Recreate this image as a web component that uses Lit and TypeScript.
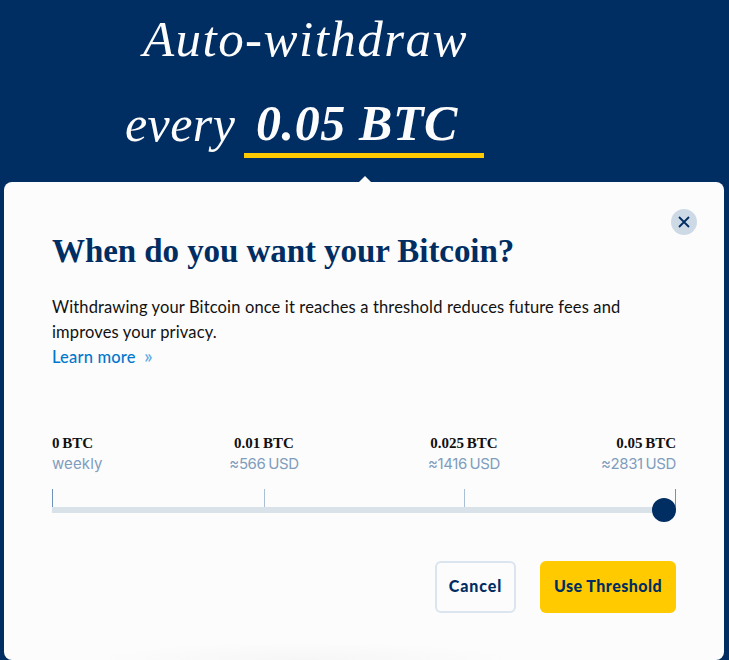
import { LitElement, html, css } from "lit";
import { customElement } from "lit/decorators.js";

const marks = [
  { btc: "0 BTC", sub: "weekly", align: "start", word: true },
  { btc: "0.01 BTC", sub: "≈566 USD", align: "center", word: false },
  { btc: "0.025 BTC", sub: "≈1416 USD", align: "center", word: false },
  { btc: "0.05 BTC", sub: "≈2831 USD", align: "end", word: false },
];

@customElement("app-root")
export class AppRoot extends LitElement {
  static styles = css`
    :host {
      display: block;
      height: 660px;
      overflow: hidden;
      background: #002d62;
      font-family: "Lato", sans-serif;
    }
    .head {
      display: flex;
      flex-direction: column;
      height: 182px;
      box-sizing: border-box;
      color: #fcfcfc;
      font-family: "Liberation Serif", serif;
      font-style: italic;
      font-size: 50px;
      position: relative;
    }
    .line1 {
      height: 83px;
      line-height: 78px;
      padding-left: 143px;
      font-size: 51px;
      letter-spacing: 1.45px;
    }
    .line2 {
      display: flex;
      align-items: flex-start;
      padding-left: 125px;
      line-height: 82px;
    }
    .every {
      width: 119px;
      letter-spacing: 0.4px;
    }
    .amount {
      width: 240px;
      height: 75px;
      box-sizing: border-box;
      border-bottom: 5px solid #ffcb00;
      padding-left: 12px;
      font-weight: 700;
      line-height: 81px;
      letter-spacing: 0.6px;
    }
    .caret {
      position: absolute;
      left: 359px;
      top: 176px;
      width: 0;
      height: 0;
      border-left: 6px solid transparent;
      border-right: 6px solid transparent;
      border-bottom: 6px solid #fcfcfc;
    }
    .panel {
      margin: 0 5px 0 4px;
      height: 478px;
      box-sizing: border-box;
      border-radius: 8px;
      background: radial-gradient(ellipse 210px 18px at 300px 100%, #f6f6f6, transparent), #fcfcfc;
      padding: 0 48px;
      position: relative;
    }
    .close {
      position: absolute;
      top: 27px;
      right: 27px;
      width: 26px;
      height: 26px;
      border-radius: 50%;
      background: #cddae6;
      border: 0;
      padding: 0;
      display: flex;
      align-items: center;
      justify-content: center;
    }
    h1 {
      margin: 0;
      padding-top: 49px;
      font-family: "Liberation Serif", serif;
      font-weight: 700;
      font-size: 33px;
      line-height: 40px;
      letter-spacing: -0.07px;
      color: #002d62;
    }
    .desc {
      margin: 24px 0 0;
      font-size: 16.5px;
      line-height: 25px;
      letter-spacing: 0.14px;
      color: #111;
    }
    .learn {
      display: block;
      font-size: 16.5px;
      line-height: 25px;
      letter-spacing: 0.18px;
      color: #0077cc;
      font-weight: 500;
    }
    .learn span {
      color: #5aa9e6;
      margin-left: 4px;
      font-size: 20px;
      line-height: 20px;
    }
    .labels {
      margin-top: 63px;
      display: grid;
      grid-template-columns: 112px 200px 200px 112px;
    }
    .mark {
      display: flex;
      flex-direction: column;
    }
    .mark.start { align-items: flex-start; }
    .mark.center { align-items: center; }
    .mark.end { align-items: flex-end; }
    .btc {
      font-family: "Liberation Serif", serif;
      font-weight: 700;
      font-size: 15px;
      line-height: 20px;
      word-spacing: -1px;
      color: #111;
    }
    .sub {
      font-family: "Inter", sans-serif;
      font-size: 15px;
      line-height: 22px;
      letter-spacing: -0.4px;
      word-spacing: -1px;
      color: #7f9dbd;
    }
    .sub.word {
      letter-spacing: 0.1px;
    }
    .ticks {
      margin-top: 14px;
      display: grid;
      grid-template-columns: 212px 200px 211px 1px;
      height: 18px;
    }
    .tick {
      width: 1px;
      background: #a9bfd5;
    }
    .tick.edge {
      background: #6f93b8;
    }
    .track {
      height: 6px;
      background: #d9e1e9;
      position: relative;
    }
    .thumb {
      position: absolute;
      right: 0;
      top: -9px;
      width: 24px;
      height: 24px;
      border-radius: 50%;
      background: #002d62;
    }
    .actions {
      margin-top: 48px;
      display: flex;
      justify-content: flex-end;
      gap: 24px;
    }
    button.btn {
      height: 52px;
      box-sizing: border-box;
      border-radius: 6px;
      font-family: "Lato", sans-serif;
      font-weight: 900;
      font-size: 16px;
      color: #002d62;
      padding: 0 0 4px;
    }
    .cancel {
      width: 81px;
      background: #fcfcfc;
      border: 2px solid #dbe5ef;
      letter-spacing: 0.9px;
    }
    .use {
      width: 136px;
      background: #ffcb00;
      border: 0;
      letter-spacing: 0.45px;
    }
  `;

  render() {
    return html`
      <div class="head">
        <div class="line1">Auto-withdraw</div>
        <div class="line2">
          <span class="every">every</span>
          <span class="amount">0.05 BTC</span>
        </div>
        <div class="caret"></div>
      </div>
      <div class="panel">
        <button class="close" aria-label="Close">
          <svg width="12" height="12" viewBox="0 0 12 12" fill="none" stroke="#002d62" stroke-width="1.8">
            <path d="M1 1 L11 11 M11 1 L1 11" />
          </svg>
        </button>
        <h1>When do you want your Bitcoin?</h1>
        <p class="desc">
          Withdrawing your Bitcoin once it reaches a threshold reduces future fees and improves your privacy.
        </p>
        <a class="learn">Learn more <span>»</span></a>
        <div class="labels">
          ${marks.map(
            (m) => html`<div class="mark ${m.align}">
              <span class="btc">${m.btc}</span>
              <span class="sub ${m.word ? "word" : ""}">${m.sub}</span>
            </div>`
          )}
        </div>
        <div class="ticks">
          <div class="tick edge"></div>
          <div class="tick"></div>
          <div class="tick"></div>
          <div class="tick edge"></div>
        </div>
        <div class="track"><div class="thumb"></div></div>
        <div class="actions">
          <button class="btn cancel">Cancel</button>
          <button class="btn use">Use Threshold</button>
        </div>
      </div>
    `;
  }
}
